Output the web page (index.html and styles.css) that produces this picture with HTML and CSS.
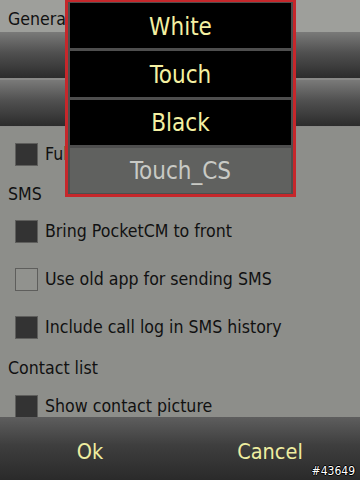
FILE: index.html
```html
<!DOCTYPE html>
<html>
<head>
<meta charset="utf-8">
<link rel="stylesheet" href="styles.css">
</head>
<body>
<div class="screen">
  <div class="main">
    <div class="tab-label">General</div>
    <div class="bar"></div>
    <div class="bar bar2"></div>
    <div class="list">
      <div class="row"><span class="box on"></span><span class="txt">Full screen</span></div>
      <div class="section s1">SMS</div>
      <div class="row"><span class="box on"></span><span class="txt">Bring PocketCM to front</span></div>
      <div class="row"><span class="box"></span><span class="txt">Use old app for sending SMS</span></div>
      <div class="row"><span class="box on"></span><span class="txt">Include call log in SMS history</span></div>
      <div class="section s2">Contact list</div>
      <div class="row"><span class="box on"></span><span class="txt">Show contact picture</span></div>
    </div>
  </div>
  <div class="footer">
    <span class="btn">Ok</span>
    <span class="btn">Cancel</span>
  </div>
  <div class="popup">
    <div class="item">White</div>
    <div class="item">Touch</div>
    <div class="item">Black</div>
    <div class="item sel">Touch_CS</div>
  </div>
  <div class="tag">#43649</div>
</div>
</body>
</html>
```
FILE: styles.css
```css
html, body {
  margin: 0;
  padding: 0;
}
body {
  width: 360px;
  height: 480px;
  overflow: hidden;
  background: #8d8e8a;
  font-family: "DejaVu Sans Condensed", "DejaVu Sans", sans-serif;
  color: #111;
}
.screen {
  position: relative;
  width: 360px;
  height: 480px;
  display: flex;
  flex-direction: column;
}
.main {
  flex: 1;
  overflow: hidden;
  display: flex;
  flex-direction: column;
}
.tab-label {
  height: 32px;
  flex: none;
  background: #9e9f9b;
  font-size: 17.6px;
  line-height: 28px;
  padding-left: 8px;
  padding-top: 5px;
  box-sizing: border-box;
}
.bar {
  height: 46px;
  flex: none;
  background: linear-gradient(#7a7a79 0%, #505050 45%, #2c2c2c 100%);
  border-bottom: 2px solid #8a8a88;
}
.bar2 {
  border-bottom: 1px solid #8a8a88;
}
.list {
  display: flex;
  flex-direction: column;
  padding-top: 3px;
}
.row {
  height: 48px;
  flex: none;
  display: flex;
  align-items: center;
  padding-left: 15px;
  gap: 7px;
  font-size: 17.6px;
}
.box {
  width: 21px;
  height: 21px;
  border: 1px solid #5e5e5c;
  background: #91928e;
  flex: none;
}
.box.on {
  background: #333333;
}
.section {
  flex: none;
  font-size: 17.6px;
  padding-left: 8px;
  box-sizing: border-box;
}
.s1 {
  height: 29px;
  line-height: 29px;
  padding-top: 2px;
}
.s2 {
  height: 31px;
  line-height: 31px;
  padding-top: 2px;
}
.footer {
  height: 63px;
  flex: none;
  background: linear-gradient(#5e5e5e 0%, #3e3e3e 45%, #2a2a2a 100%);
  display: flex;
  align-items: center;
}
.btn {
  flex: 1;
  text-align: center;
  color: #eeeda0;
  font-size: 21.5px;
  padding-top: 6px;
}
.popup {
  position: absolute;
  left: 65px;
  top: -1px;
  width: 231px;
  height: 198px;
  box-sizing: border-box;
  border: 3px solid #c6272b;
  background: #4e4e4e;
  display: flex;
  flex-direction: column;
}
.item {
  flex: 1;
  margin: 1px 2px 2px 2px;
  background: #000;
  color: #f4f0a2;
  font-size: 24px;
  display: flex;
  align-items: center;
  justify-content: center;
  padding-top: 2px;
}
.item.sel {
  background: #60615f;
  color: #c9cac5;
  margin-bottom: 1px;
}
.tag {
  position: absolute;
  right: 5px;
  bottom: 2px;
  color: #fff;
  font-family: "DejaVu Sans Condensed", sans-serif;
  font-size: 12px;
  text-shadow: 1px 0 0 #000, -1px 0 0 #000, 0 1px 0 #000, 0 -1px 0 #000;
}
```
